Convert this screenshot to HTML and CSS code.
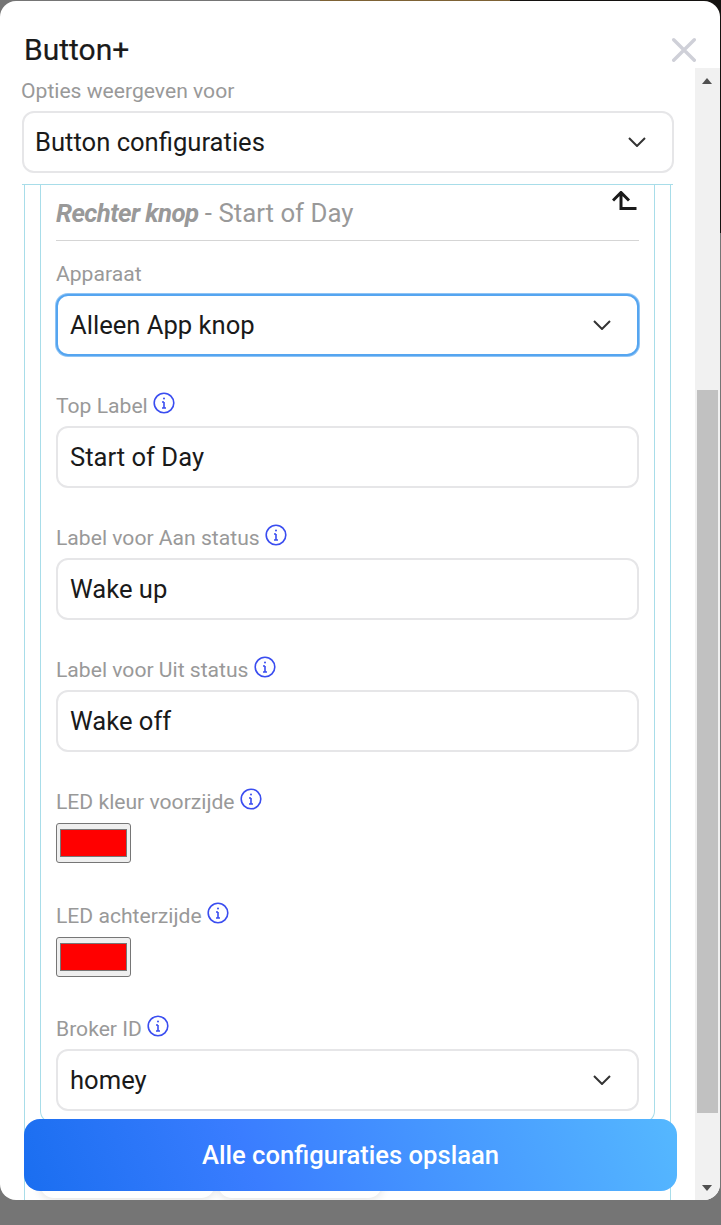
FILE: index.html
```html
<!DOCTYPE html>
<html lang="en">

<head>
  <meta charset="UTF-8">
  <meta name="viewport" content="width=device-width, initial-scale=1.0">
  <title>Button+</title>
  <link rel="stylesheet" href="styles.css">
</head>

<body>
  <!-- Dialog -->
  <div class="modal">
    <div class="modal-header">
      <h2>Button+</h2>
      <svg class="close-icon" width="26" height="26" viewBox="0 0 26 26">
        <path d="M3.7 3.7 L24.3 24.3 M24.3 3.7 L3.7 24.3" />
      </svg>
    </div>

    <div class="modal-body">
      <div class="view-select">
        <label class="label">Opties weergeven voor</label>
        <div class="select-wrap">
          <select class="control">
            <option>Button configuraties</option>
          </select>
          <svg class="chevron" width="18" height="10" viewBox="0 0 18 10"><path d="M1 1 L9 9 L17 1" /></svg>
        </div>
      </div>

      <div class="outer-box">
        <div class="inner-box">
          <div class="card-title">
            <span><b>Rechter knop</b> - Start of Day</span>
            <svg class="collapse-icon" width="26" height="20" viewBox="0 0 26 20">
              <path d="M1 9.5 L9 1.5 L17 9.5 M9 1.5 V17.5 H24.5" />
            </svg>
          </div>

          <div class="field first">
            <label class="label">Apparaat</label>
            <div class="select-wrap">
              <select class="control focused">
                <option>Alleen App knop</option>
              </select>
              <svg class="chevron" width="18" height="10" viewBox="0 0 18 10"><path d="M1 1 L9 9 L17 1" /></svg>
            </div>
          </div>

          <div class="field">
            <label class="label">Top Label
              <svg class="info" width="22" height="22" viewBox="0 0 22 22"><circle cx="11" cy="11" r="9.8" /><path d="M11 10 V16 M9 10 H11 M9 16 H13" /><circle class="dot" cx="11" cy="6.5" r="1" /></svg>
            </label>
            <input class="control" type="text" value="Start of Day">
          </div>

          <div class="field">
            <label class="label">Label voor Aan status
              <svg class="info" width="22" height="22" viewBox="0 0 22 22"><circle cx="11" cy="11" r="9.8" /><path d="M11 10 V16 M9 10 H11 M9 16 H13" /><circle class="dot" cx="11" cy="6.5" r="1" /></svg>
            </label>
            <input class="control" type="text" value="Wake up">
          </div>

          <div class="field">
            <label class="label">Label voor Uit status
              <svg class="info" width="22" height="22" viewBox="0 0 22 22"><circle cx="11" cy="11" r="9.8" /><path d="M11 10 V16 M9 10 H11 M9 16 H13" /><circle class="dot" cx="11" cy="6.5" r="1" /></svg>
            </label>
            <input class="control" type="text" value="Wake off">
          </div>

          <div class="field led">
            <label class="label">LED kleur voorzijde
              <svg class="info" width="22" height="22" viewBox="0 0 22 22"><circle cx="11" cy="11" r="9.8" /><path d="M11 10 V16 M9 10 H11 M9 16 H13" /><circle class="dot" cx="11" cy="6.5" r="1" /></svg>
            </label>
            <input class="swatch" type="color" value="#ff0000">
          </div>

          <div class="field led">
            <label class="label">LED achterzijde
              <svg class="info" width="22" height="22" viewBox="0 0 22 22"><circle cx="11" cy="11" r="9.8" /><path d="M11 10 V16 M9 10 H11 M9 16 H13" /><circle class="dot" cx="11" cy="6.5" r="1" /></svg>
            </label>
            <input class="swatch" type="color" value="#ff0000">
          </div>

          <div class="field broker">
            <label class="label">Broker ID
              <svg class="info" width="22" height="22" viewBox="0 0 22 22"><circle cx="11" cy="11" r="9.8" /><path d="M11 10 V16 M9 10 H11 M9 16 H13" /><circle class="dot" cx="11" cy="6.5" r="1" /></svg>
            </label>
            <div class="select-wrap">
              <select class="control">
                <option>homey</option>
              </select>
              <svg class="chevron" width="18" height="10" viewBox="0 0 18 10"><path d="M1 1 L9 9 L17 1" /></svg>
            </div>
          </div>
        </div>

        <!-- Buttons cut off behind the save button -->
        <div class="card-actions">
          <div class="action first-action"></div>
          <div class="action second-action"></div>
        </div>
      </div>
    </div>

    <!-- Fake scrollbar -->
    <div class="scrollbar">
      <span class="arrow up"></span>
      <div class="thumb"></div>
      <span class="arrow down"></span>
    </div>

    <button class="save-btn" type="button">Alle configuraties opslaan</button>
  </div>
</body>

</html>
```

FILE: styles.css
```css
/* Reset some default styles */
html,
body {
  margin: 0;
  padding: 0;
  font-family: Roboto, "Liberation Sans", sans-serif;
}

/* Page behind the dialog shows at the top and right edge */
body {
  height: 1225px;
  overflow: hidden;
  background:
    linear-gradient(to right, #757575 320px, #7d6235 320px, #7d6235 510px, #141210 510px) top / 100% 1px no-repeat,
    linear-gradient(#141210, #141210) right top / 1px 233px no-repeat,
    linear-gradient(#141210, #141210) right top / 24px 24px no-repeat,
    #757575;
}

/* Dialog */
.modal {
  position: relative;
  width: 720px;
  height: 1199px;
  margin-top: 1px;
  background-color: #fff;
  border-radius: 16px;
  overflow: hidden;
}

.modal-header {
  display: flex;
  justify-content: space-between;
  align-items: center;
  height: 67px;
  padding: 29px 24px 0 24px;
  box-sizing: border-box;
}

.modal-header h2 {
  margin: 0;
  font-size: 30px;
  font-weight: 400;
  color: #1a1a1a;
  -webkit-text-stroke: 0.2px #1a1a1a;
}

.close-icon path {
  fill: none;
  stroke: #cfd0d8;
  stroke-width: 3.4;
  stroke-linecap: round;
}

.modal-body {
  width: 695px;
  overflow: hidden;
}

/* Labels and form controls */
.label {
  display: flex;
  align-items: flex-start;
  gap: 5px;
  height: 26px;
  margin-bottom: 8px;
  font-size: 21.12px;
  line-height: 28px;
  color: #999;
}

.control {
  display: block;
  width: 100%;
  height: 62px;
  padding: 0 12px;
  box-sizing: border-box;
  border: 2px solid #e6e6e8;
  border-radius: 12px;
  background-color: #fff;
  font-family: Roboto, "Liberation Sans", sans-serif;
  font-size: 25.6px;
  color: #1a1a1a;
  outline: none;
  appearance: none;
}

.control.focused {
  border-color: #55a5f0;
  box-shadow: 0 0 0 1px #8fc4f5;
}

.select-wrap {
  position: relative;
}

.chevron {
  position: absolute;
  right: 28px;
  top: 26px;
}

.chevron path {
  fill: none;
  stroke: #333;
  stroke-width: 2;
}

.view-select {
  margin-left: 22px;
  width: 652px;
  height: 106px;
  padding-top: 10px;
}

.view-select .label {
  margin-left: -1px;
  margin-bottom: 7px;
  line-height: 26px;
}

.view-select .control {
  padding-left: 11px;
}

/* Nested outlined boxes */
.outer-box {
  margin-left: 22px;
  width: 651px;
  height: 1100px;
  padding: 0 2px;
  box-sizing: border-box;
  border-top: 1px solid #a8dde9;
  position: relative;
}

.outer-box::before {
  content: "";
  position: absolute;
  top: 0;
  bottom: 0;
  left: 2px;
  right: 2px;
  border-left: 1px solid #a8dde9;
  border-right: 1px solid #a8dde9;
}

.inner-box {
  position: relative;
  margin: 0 16px;
  height: 937px;
  padding: 0 15px;
  border: 1px solid #a8dde9;
  border-top: none;
  border-radius: 0 0 12px 12px;
}

.card-title {
  display: flex;
  justify-content: space-between;
  height: 55px;
  border-bottom: 1px solid #d5d5d5;
  font-size: 25.8px;
  line-height: 56px;
  color: #999;
}

.card-title b {
  font-style: italic;
  font-weight: 700;
  letter-spacing: -0.6px;
}

.collapse-icon {
  margin-top: 6px;
  margin-right: 1px;
}

.collapse-icon path {
  fill: none;
  stroke: #1a1a1a;
  stroke-width: 3;
}

.field {
  margin-bottom: 36px;
}

.field.first {
  margin-top: 19px;
}

.field.led {
  margin-bottom: 39px;
}

.field.broker .label {
  margin-bottom: 7px;
  line-height: 26px;
}

.field.broker .info {
  margin-top: -1px;
}

.info circle,
.info path {
  fill: none;
  stroke: #3a4df0;
  stroke-width: 1.6;
}

.info .dot {
  fill: #3a4df0;
  stroke: none;
}

.swatch {
  display: block;
  width: 75px;
  height: 40px;
  margin-top: 9px;
  padding: 1px;
  border: 1px solid #767676;
  border-radius: 3px;
  background-color: #efefef;
}

/* Cut off row under the save button */
.card-actions {
  display: flex;
  gap: 3px;
  margin: 26px 0 0 16px;
}

.action {
  height: 49px;
  background-color: #fff;
  border-radius: 14px;
  box-shadow: 0 2px 10px rgba(0, 0, 0, 0.12);
}

.first-action {
  width: 175px;
}

.second-action {
  width: 164px;
}

/* Scrollbar */
.scrollbar {
  position: absolute;
  top: 67px;
  right: 0;
  bottom: 0;
  width: 25px;
  background-color: #f1f1f1;
}

.thumb {
  position: absolute;
  top: 322px;
  left: 2px;
  width: 21px;
  height: 723px;
  background-color: #c1c1c1;
}

.arrow {
  position: absolute;
  left: 7px;
  width: 0;
  height: 0;
  border-left: 5px solid transparent;
  border-right: 5px solid transparent;
}

.arrow.up {
  top: 10px;
  border-bottom: 6px solid #505050;
}

.arrow.down {
  bottom: 9px;
  border-top: 6px solid #505050;
}

/* Save button */
.save-btn {
  position: absolute;
  left: 24px;
  top: 1118px;
  width: 653px;
  height: 72px;
  border: none;
  border-radius: 16px;
  background: linear-gradient(70deg, #1a6ef0 0%, #3a7dff 35%, #55b8ff 100%);
  font-family: Roboto, "Liberation Sans", sans-serif;
  font-size: 25.6px;
  font-weight: 500;
  color: #fff;
}
```
